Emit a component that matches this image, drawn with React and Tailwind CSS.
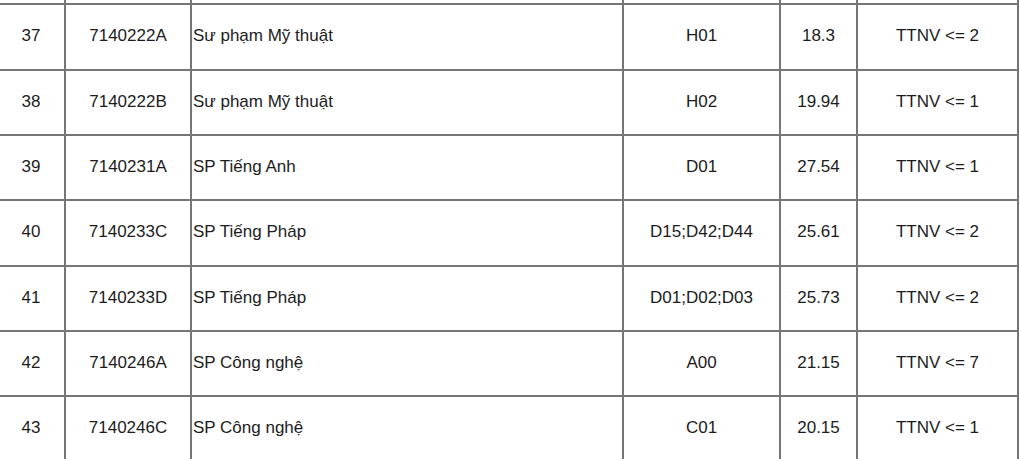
import React from "react";

const rows = [
  ["", "", "", "", "", ""],
  ["37", "7140222A", "Sư phạm Mỹ thuật", "H01", "18.3", "TTNV <= 2"],
  ["38", "7140222B", "Sư phạm Mỹ thuật", "H02", "19.94", "TTNV <= 1"],
  ["39", "7140231A", "SP Tiếng Anh", "D01", "27.54", "TTNV <= 1"],
  ["40", "7140233C", "SP Tiếng Pháp", "D15;D42;D44", "25.61", "TTNV <= 2"],
  ["41", "7140233D", "SP Tiếng Pháp", "D01;D02;D03", "25.73", "TTNV <= 2"],
  ["42", "7140246A", "SP Công nghệ", "A00", "21.15", "TTNV <= 7"],
  ["43", "7140246C", "SP Công nghệ", "C01", "20.15", "TTNV <= 1"],
];

const cell = "border-2 border-[#767676] h-[65.33px] p-0 pb-[2px] align-middle";

export default function App() {
  return (
    <div className="w-[1020px] h-[459px] overflow-hidden bg-white">
      <table
        className="border-collapse table-fixed -mt-[62px] -ml-[4px] text-[17px] text-[#1c1c1c]"
        style={{ fontFamily: '"Liberation Sans", Arial, sans-serif' }}
      >
        <colgroup>
          <col className="w-[68px]" />
          <col className="w-[126px]" />
          <col className="w-[432px]" />
          <col className="w-[157px]" />
          <col className="w-[77px]" />
          <col className="w-[161px]" />
        </colgroup>
        <tbody>
          {rows.map((r, i) => (
            <tr key={i}>
              <td className={`${cell} text-center`}>{r[0]}</td>
              <td className={`${cell} text-center`}>{r[1]}</td>
              <td className={`${cell} text-left pl-[1px]`}>{r[2]}</td>
              <td className={`${cell} text-center`}>{r[3]}</td>
              <td className={`${cell} text-center`}>{r[4]}</td>
              <td className={`${cell} text-center`}>{r[5]}</td>
            </tr>
          ))}
        </tbody>
      </table>
    </div>
  );
}
